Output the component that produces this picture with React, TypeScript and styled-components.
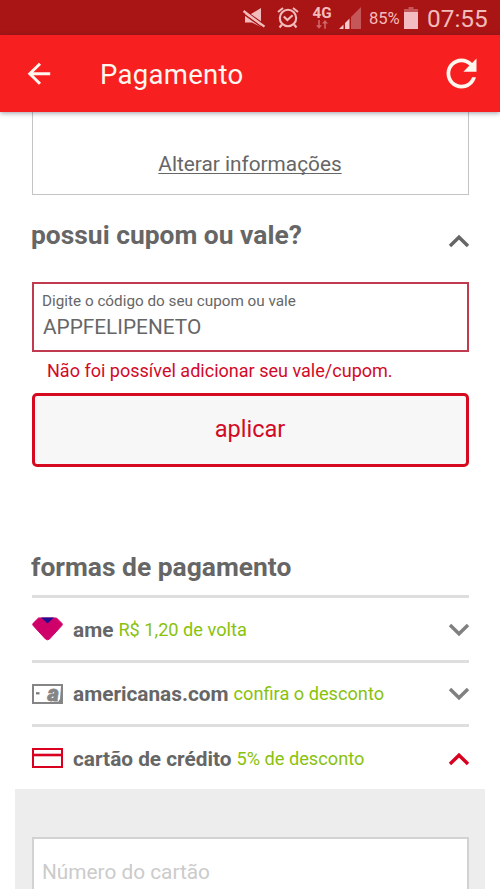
import React from 'react';
import styled, { createGlobalStyle } from 'styled-components';

const Global = createGlobalStyle`
  *, *::before, *::after { box-sizing: border-box; }
  body {
    margin: 0;
    background: #fff;
    color: #666;
    font-family: Roboto, "Liberation Sans", sans-serif;
  }
  svg { display: block; flex: none; }
`;

const Screen = styled.div`
  height: 889px;
  overflow: hidden;
  display: flex;
  flex-direction: column;
`;

const StatusBar = styled.div`
  flex: none;
  height: 35px;
  padding: 0 0 0 242px;
  display: flex;
  align-items: center;
  background: #a91414;
  color: #f3bcbc;
`;

const SoundAndAlarm = styled.div`
  flex: none;
  display: flex;
  align-items: center;
  gap: 11px;
`;

const Network = styled.div`
  flex: none;
  width: 22px;
  margin: 0 6px 0 12px;
  display: flex;
  flex-direction: column;
  align-items: center;
  font-size: 15.3px;
  font-weight: 700;
  line-height: 14px;
`;

const BatteryLevel = styled.span`
  flex: none;
  width: 31px;
  margin: 2px 4px 0 8px;
  font-size: 16.6px;
  line-height: 20px;
  letter-spacing: -0.1px;
`;

const Clock = styled.span`
  margin: 2px 0 0 9px;
  font-size: 24.4px;
  line-height: 28px;
`;

const AppBar = styled.header`
  flex: none;
  height: 77px;
  padding: 0 16px 0 26px;
  display: flex;
  align-items: center;
  background: #f71f20;
  box-shadow: 0 1px 5px rgba(30, 30, 60, 0.45);
  color: #fff6ee;
  z-index: 1;
`;

const Title = styled.h1`
  flex: 1;
  margin: 2px 0 0 48px;
  font-size: 27.5px;
  font-weight: 400;
  line-height: 34px;
  letter-spacing: 0.3px;
`;

const Content = styled.main`
  padding: 0 31px 0 32px;
  display: flex;
  flex-direction: column;
`;

const InfoCard = styled.section`
  height: 83px;
  border: 1px solid #c4c4c4;
  border-top: 0;
  padding: 40px 1px 0 0;
  text-align: center;
`;

const EditLink = styled.a`
  font-size: 20.8px;
  line-height: 24px;
  text-decoration: underline;
  text-decoration-thickness: 1px;
  text-underline-offset: 2px;
  text-decoration-skip-ink: none;
`;

const SectionHeader = styled.div`
  height: 87px;
  padding-top: 24px;
  display: flex;
  justify-content: space-between;
`;

const Heading = styled.h2`
  margin: 0 0 0 -1px;
  font-size: 26.4px;
  font-weight: 700;
  line-height: 32px;
`;

const HeaderToggle = styled.div`
  padding-top: 15px;
  margin-right: -1px;
`;

const CouponField = styled.div`
  height: 70px;
  padding: 7px 9px 0;
  border: 2px solid #c03a50;
`;

const FieldLabel = styled.div`
  font-size: 15.28px;
  line-height: 20px;
  margin-left: -1px;
`;

const FieldValue = styled.div`
  margin-top: 2px;
  font-size: 20.8px;
  line-height: 28px;
`;

const ErrorText = styled.p`
  margin: 7px 0 0 15px;
  font-size: 18.05px;
  line-height: 24px;
  color: #d20a28;
`;

const ApplyButton = styled.button`
  height: 74px;
  margin-top: 10px;
  padding: 0 1px 2px 0;
  border: 3px solid #d50a20;
  border-radius: 5px;
  background: #f7f7f7;
  color: #d30a25;
  font: 400 23.6px Roboto, "Liberation Sans", sans-serif;
`;

const PaymentSection = styled.section`
  margin-top: 84px;
`;

const MethodList = styled.div`
  margin-top: 12px;
`;

const Method = styled.div<{ $height: number }>`
  height: ${({ $height }) => $height}px;
  padding: 1px 0 0;
  border-top: 3px solid #dedede;
  display: flex;
  align-items: center;
`;

const MethodIcon = styled.div`
  width: 41px;
  padding-bottom: 2px;
`;

const MethodName = styled.span`
  font-size: 20.8px;
  font-weight: 700;
  line-height: 26px;
`;

const MethodOffer = styled.span`
  flex: 1;
  margin-left: 5px;
  font-size: 18.2px;
  line-height: 26px;
  color: #88c20c;
`;

const MethodToggle = styled.div`
  margin-right: -1px;
`;

const CardPanel = styled.div`
  height: 110px;
  margin: 0 -16px 0 -17px;
  padding: 48px 16px 0 17px;
  background: #ededed;
`;

const CardInput = styled.input`
  display: block;
  width: 100%;
  height: 70px;
  padding: 0 8px;
  border: 2px solid #d2d2d2;
  border-radius: 0;
  background: #fff;
  font: 400 20.8px Roboto, "Liberation Sans", sans-serif;
  &::placeholder { color: #cbcbcb; opacity: 1; }
`;

function Chevron({ up, color }: { up?: boolean; color: string }) {
  return (
    <svg width="22" height="14" viewBox="0 0 22 14" fill="none" stroke={color} strokeWidth="3.4">
      <path d={up ? 'M2 12 11 3.2 20 12' : 'M2 2 11 10.8 20 2'} />
    </svg>
  );
}

const MuteIcon = () => (
  <svg width="24" height="22" viewBox="0 0 24 22">
    <path d="M3 7h6L19 1v19l-9-4.500H3z" fill="#f3bcbc" />
    <path d="M0 1.800 23 18.300" stroke="#a91414" strokeWidth="1.800" />
    <path d="M0 5.800 21 21" stroke="#a91414" strokeWidth="1.400" />
    <path d="M1.500 4 22.500 19.700" stroke="#f3bcbc" strokeWidth="2.300" />
  </svg>
);

const AlarmIcon = () => (
  <svg width="22" height="22" viewBox="0 0 22 22" fill="none" stroke="#f3bcbc" strokeWidth="2.100">
    <circle cx="11" cy="11" r="8.200" />
    <path d="M1 5 6 1M21 5 16 1M6.800 9.500l3.600 3.500 5.200-4.700M5 17.500l-2.500 3M17 17.500l2.500 3" />
  </svg>
);

const DataArrows = () => (
  <svg width="12" height="9" viewBox="0 0 12 9" fill="#d06668">
    <path d="M2.200 0h1.600v5.300H6L3 8.800 0 5.300h2.200zM8.200 8.800h1.600V3.500H12L9 0 6 3.500h2.200z" />
  </svg>
);

const SignalIcon = () => (
  <svg width="22" height="22" viewBox="0 0 22 22">
    <path d="M0 22 4.500 17.500V22zM6 22v-6L10.500 11.500V22z" fill="#f5c9c9" />
    <path d="M12 22V10L22 0v22z" fill="#c65759" />
  </svg>
);

const BatteryIcon = () => (
  <svg width="14" height="22" viewBox="0 0 14 22">
    <path d="M4.500 0h5v2H14v3H0V2h4.500z" fill="#c65759" />
    <path d="M0 5h14v17H0z" fill="#f3bcc2" />
  </svg>
);

const BackIcon = () => (
  <svg width="26" height="24" viewBox="0 0 26 24" fill="none" stroke="#fff6ee" strokeWidth="3">
    <path d="M24.200 11.700H4M14 1.700 3.800 11.700 14 21.700" />
  </svg>
);

const RefreshIcon = () => (
  <svg width="45" height="45" viewBox="0 0 24 24" fill="#fff6ee">
    <path d="M17.65 6.35C16.2 4.9 14.21 4 12 4c-4.42 0-7.99 3.58-7.99 8s3.57 8 7.99 8c3.73 0 6.84-2.55 7.73-6h-2.08c-.82 2.33-3.04 4-5.65 4-3.31 0-6-2.69-6-6s2.69-6 6-6c1.66 0 3.14.69 4.22 1.78L13 11h7V4l-2.35 2.35z" />
  </svg>
);

const AmeIcon = () => (
  <svg width="31" height="24" viewBox="0 0 31 24">
    <path d="M6.500 1h18l5.300 5.300q1 1.100 0 2.300L17.500 22q-2 1.600-4 0L1.200 8.600q-1-1.200 0-2.300z" fill="#d0006a" stroke="#d0006a" />
    <path d="M9 .5h13L15.500 6.500z" fill="#240c90" />
  </svg>
);

const CardMark = styled.text`
  font: italic 900 22px Roboto, "Liberation Sans", sans-serif;
`;

const AmericanasIcon = () => (
  <svg width="31" height="28" viewBox="0 -5 31 28">
    <path d="M0 0h31v20H0z" fill="#858585" />
    <path d="M2 2h27l-1 13-2 3H2z" fill="#fff" />
    <CardMark x="15.500" y="17" fill="#858585" stroke="#858585" strokeWidth="0.800">a</CardMark>
    <path d="M4 8.200h3.500v2.200H4z" fill="#777" />
  </svg>
);

const CreditCardIcon = () => (
  <svg width="31" height="20" viewBox="0 0 31 20" fill="none" stroke="#d9001f">
    <path d="M1 1h29v18H1z" strokeWidth="2" />
    <path d="M1 7h29" strokeWidth="2.600" />
  </svg>
);

export default function App() {
  return (
    <>
      <Global />
      <Screen>
        <StatusBar>
          <SoundAndAlarm>
            <MuteIcon />
            <AlarmIcon />
          </SoundAndAlarm>
          <Network>
            4G
            <DataArrows />
          </Network>
          <SignalIcon />
          <BatteryLevel>85%</BatteryLevel>
          <BatteryIcon />
          <Clock>07:55</Clock>
        </StatusBar>
        <AppBar>
          <BackIcon />
          <Title>Pagamento</Title>
          <RefreshIcon />
        </AppBar>
        <Content>
          <InfoCard>
            <EditLink>Alterar informações</EditLink>
          </InfoCard>
          <SectionHeader>
            <Heading>possui cupom ou vale?</Heading>
            <HeaderToggle>
              <Chevron up color="#666" />
            </HeaderToggle>
          </SectionHeader>
          <CouponField>
            <FieldLabel>Digite o código do seu cupom ou vale</FieldLabel>
            <FieldValue>APPFELIPENETO</FieldValue>
          </CouponField>
          <ErrorText>Não foi possível adicionar seu vale/cupom.</ErrorText>
          <ApplyButton>aplicar</ApplyButton>
          <PaymentSection>
            <Heading>formas de pagamento</Heading>
            <MethodList>
              <Method $height={65}>
                <MethodIcon><AmeIcon /></MethodIcon>
                <MethodName>ame</MethodName>
                <MethodOffer>R$ 1,20 de volta</MethodOffer>
                <MethodToggle><Chevron color="#808080" /></MethodToggle>
              </Method>
              <Method $height={64}>
                <MethodIcon><AmericanasIcon /></MethodIcon>
                <MethodName>americanas.com</MethodName>
                <MethodOffer>confira o desconto</MethodOffer>
                <MethodToggle><Chevron color="#808080" /></MethodToggle>
              </Method>
              <Method $height={65}>
                <MethodIcon><CreditCardIcon /></MethodIcon>
                <MethodName>cartão de crédito</MethodName>
                <MethodOffer>5% de desconto</MethodOffer>
                <MethodToggle><Chevron up color="#d9001f" /></MethodToggle>
              </Method>
            </MethodList>
            <CardPanel>
              <CardInput placeholder="Número do cartão" />
            </CardPanel>
          </PaymentSection>
        </Content>
      </Screen>
    </>
  );
}
